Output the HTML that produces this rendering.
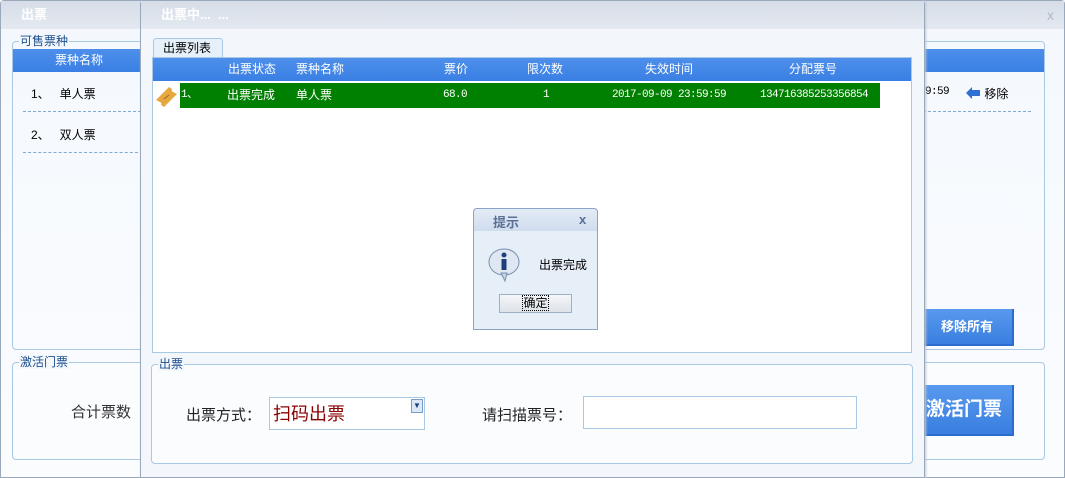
<!DOCTYPE html>
<html><head><meta charset="utf-8"><style>
*{margin:0;padding:0;box-sizing:border-box}
body{width:1065px;height:478px;overflow:hidden;position:relative;font-family:"Liberation Sans","Noto Sans CJK SC","WenQuanYi Zen Hei",sans-serif;font-size:12px;color:#000;background:#f4f8fd}
.abs{position:absolute}
.title{background:linear-gradient(#d6dde8,#e4e9f0);height:28px;color:#fff;font-weight:bold;font-size:13px;line-height:28px}
.fs{position:absolute;border:1px solid #a8c8e4;border-radius:4px}
.legend{position:absolute;top:-8px;left:6px;background:#f4f8fd;color:#1c4f8c;font-size:12px;padding:0 1px;line-height:14px}
.hdr{background:linear-gradient(#4d8fea,#3a7fe4);color:#fff}
.btn{background:linear-gradient(#5899ee,#3a7fe0);color:#fff;font-weight:bold;text-align:center;border-right:2px solid #2c6bd0;border-bottom:2px solid #2c6bd0}
.dash{border-top:1px dashed #7eaad4;height:0}
.mono{font-family:'Liberation Mono',monospace;font-size:11px;letter-spacing:-0.6px}
</style></head><body>
<div class="abs" style="left:0;top:0;width:1065px;height:478px;border:1px solid #9aa8bc;border-radius:4px 4px 0 0;background:linear-gradient(#f4f8fd,#fbfcfe)">
 <div class="title" style="padding-left:20px">出票</div>
 <div class="abs" style="right:10px;top:6px;color:#b0b8c4;font-size:14px">x</div>
</div>
<div class="fs" style="left:12px;top:41px;width:1033px;height:309px">
 <div class="legend">可售票种</div>
 <div class="hdr abs" style="left:0;top:7px;width:1031px;height:23px;line-height:22px"><span style="margin-left:42px">票种名称</span></div>
 <div class="abs" style="left:18px;top:43px">1、&nbsp;&nbsp;&nbsp;单人票</div>
 <div class="abs" style="left:18px;top:84px">2、&nbsp;&nbsp;&nbsp;双人票</div>
 <div class="dash abs" style="left:10px;top:69px;width:1008px"></div>
 <div class="dash abs" style="left:10px;top:110px;width:120px"></div>
 <div class="abs mono" style="left:912px;top:44px">9:59</div>
 <div class="abs" style="left:952px;top:43px"><svg width="16" height="14" viewBox="0 0 16 14" style="vertical-align:-2px"><path d="M1 7 L7 1 V4 H15 V10 H7 V13 Z" fill="#2e6fd4"/></svg> 移除</div>
 <div class="btn abs" style="left:909px;top:267px;width:92px;height:37px;line-height:35px;font-size:13px">移除所有</div>
</div>
<div class="fs" style="left:12px;top:362px;width:1033px;height:98px;background:#fbfcfe">
 <div class="legend">激活门票</div>
 <div class="abs" style="left:58px;top:38px;font-size:15px;color:#333">合计票数</div>
 <div class="btn abs" style="left:903px;top:22px;width:98px;height:51px;line-height:50px;font-size:19px">激活门票</div>
</div>
<div class="abs" style="left:140px;top:0;width:785px;height:478px;border:1px solid #9aa8bc;border-radius:4px 4px 0 0;background:#f3f7fc;box-shadow:1px 0 2px #c0c8d4">
 <div class="title" style="padding-left:20px">出票中...&nbsp;&nbsp;...</div>
</div>
<div class="abs" style="left:153px;top:38px;width:70px;height:21px;border:1px solid #a8c8e4;border-bottom:none;border-radius:3px 3px 0 0;background:#e6f0fa;line-height:19px;padding-left:9px">出票列表</div>
<div class="abs" style="left:152px;top:57px;width:760px;height:296px;border:1px solid #a8c8e4;background:#fff">
 <div class="hdr abs" style="left:0;top:0;width:758px;height:23px;line-height:23px">
  <span class="abs" style="left:75px">出票状态</span><span class="abs" style="left:143px">票种名称</span><span class="abs" style="left:291px">票价</span><span class="abs" style="left:374px">限次数</span><span class="abs" style="left:492px">失效时间</span><span class="abs" style="left:636px">分配票号</span>
 </div>
 <svg class="abs" style="left:1px;top:26px" width="26" height="24" viewBox="0 0 26 24"><path d="M2 16 L15 3 L18 5 Q17 7 19 8 L23 10 L10 23 L7 21 Q8 19 6 18 Z" fill="#e8a840"/><path d="M10 15 L15 11" stroke="#9a6a20" stroke-width="1"/></svg>
 <div class="abs" style="left:27px;top:25px;width:700px;height:25px;background:#008000;color:#fff;line-height:25px">
  <span class="abs mono" style="left:1px">1、</span><span class="abs" style="left:47px">出票完成</span><span class="abs" style="left:116px">单人票</span><span class="abs mono" style="left:263px">68.0</span><span class="abs mono" style="left:363px">1</span><span class="abs mono" style="left:432px">2017-09-09 23:59:59</span><span class="abs mono" style="left:580px">134716385253356854</span>
 </div>
</div>
<div class="fs" style="left:151px;top:364px;width:762px;height:100px;background:#fbfcfe">
 <div class="legend" style="background:#f3f7fc">出票</div>
 <div class="abs" style="left:34px;top:39px;font-size:15px;color:#222">出票方式：</div>
 <div class="abs" style="left:117px;top:32px;width:156px;height:33px;border:1px solid #a8c8e4;background:#fff;color:#8b0000;font-size:18px;line-height:32px;padding-left:3px">扫码出票
  <div class="abs" style="right:1px;top:1px;width:12px;height:14px;border:1px solid #7a9cc8;background:#dce8f8;font-size:8px;line-height:12px;text-align:center;color:#1c3f7c">▼</div></div>
 <div class="abs" style="left:330px;top:39px;font-size:15px;color:#222">请扫描票号：</div>
 <div class="abs" style="left:431px;top:31px;width:274px;height:33px;border:1px solid #a8c8e4;background:#fff"></div>
</div>
<div class="abs" style="left:473px;top:208px;width:125px;height:122px;border:1px solid #8aa4c4;border-radius:4px 4px 0 0;background:#e6eef8">
 <div class="abs" style="left:0;top:0;width:123px;height:22px;background:linear-gradient(#e4ecf6,#cfdcee);border-radius:4px 4px 0 0"></div>
 <div class="abs" style="left:19px;top:3px;color:#5a6f94;font-weight:bold;font-size:13px">提示</div>
 <div class="abs" style="left:105px;top:3px;color:#5a6f94;font-weight:bold;font-size:13px">x</div>
 <svg class="abs" style="left:13px;top:38px" width="36" height="36" viewBox="0 0 36 36"><ellipse cx="17" cy="15" rx="15" ry="13" fill="#dfe8f2" stroke="#7890b0"/><path d="M14 26 L18 34 L20 26Z" fill="#c6d4e6" stroke="#7890b0"/><circle cx="17" cy="8" r="2.5" fill="#1c3f7c"/><rect x="14.5" y="12" width="5" height="11" fill="#1c3f7c"/></svg>
 <div class="abs" style="left:65px;top:47px">出票完成</div>
 <div class="abs" style="left:25px;top:85px;width:73px;height:19px;border:1px solid #a0b0c4;background:linear-gradient(#f4f6f8,#dde3ea);text-align:center;line-height:17px"><span style="outline:1px dotted #000">确定</span></div>
</div>
</body></html>
